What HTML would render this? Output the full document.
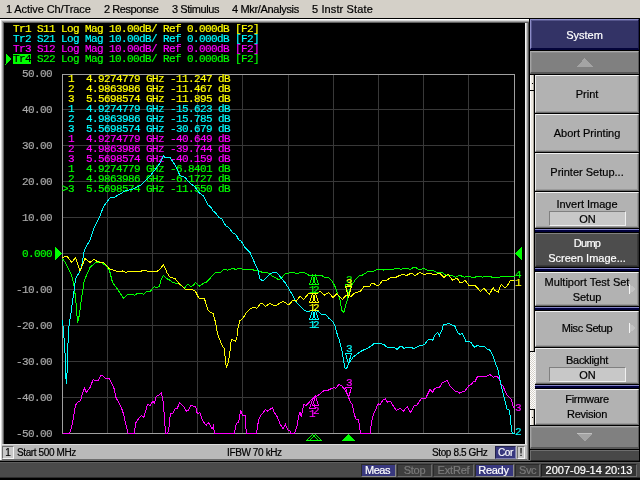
<!DOCTYPE html><html><head><meta charset="utf-8"><title>E5071C</title><style>
html,body{margin:0;padding:0;background:#000;}
body{width:640px;height:480px;overflow:hidden;position:relative;font-family:"Liberation Sans",sans-serif;font-size:11px;color:#000;-webkit-text-stroke:0.2px currentColor;}
div{position:absolute;box-sizing:border-box;white-space:pre;}
.menu{left:0;top:0;width:640px;height:18px;background:#d4d0c8;}
.menu span{position:absolute;top:3px;line-height:13px;}
.mono{font-family:"Liberation Mono",monospace;font-size:10px;line-height:10px;letter-spacing:0;}
.t{font-family:"Liberation Mono",monospace;font-size:11px;letter-spacing:-0.6px;line-height:10px;height:10px;}
.btn{left:535px;width:104px;background:#b2b2b2;border-top:1px solid #f0f0f0;border-left:1px solid #ececec;border-bottom:1px solid #6a6a6a;border-right:1px solid #6a6a6a;box-shadow:inset -1px -1px 0 #9a9a9a;text-align:center;}
.btn span{position:absolute;left:0;width:102px;text-align:center;line-height:13px;}
.on{left:13px;width:77px;height:15px;background:#c8c8c8;border-top:1px solid #808080;border-left:1px solid #808080;border-bottom:1px solid #f0f0f0;border-right:1px solid #f0f0f0;text-align:center;line-height:15px;}
.blue{left:535px;width:104px;height:3px;background:#00003c;border-top:1px solid #8484c8;}
.sb{top:446px;line-height:13px;font-size:10px;letter-spacing:-0.38px;}
.cell{top:464px;height:13px;line-height:11px;text-align:center;border:1px solid;font-size:11px;}
.nv{background:#38387e;color:#fff;border-color:#2a2a2a #8a8a8a #8a8a8a #2a2a2a;}
.dk{background:#3e3e3e;color:#7a7a7a;border-color:#2a2a2a #6a6a6a #6a6a6a #2a2a2a;}
</style></head><body><div id="w" style="left:0;top:0;width:640px;height:480px;will-change:transform">
<div class="menu"><span style="left:6px;letter-spacing:-0.1px">1 Active Ch/Trace</span><span style="left:104px;letter-spacing:-0.44px">2 Response</span><span style="left:172px;letter-spacing:-0.44px">3 Stimulus</span><span style="left:232px;letter-spacing:-0.33px">4 Mkr/Analysis</span><span style="left:312px;letter-spacing:0.12px">5 Instr State</span></div>
<div style="left:0;top:19px;width:530px;height:442px;background:#fff"></div>
<div style="left:1px;top:20px;width:528px;height:441px;background:#d6d6d6"></div>
<div style="left:2px;top:21px;width:527px;height:440px;background:#a0a0a0"></div>
<div style="left:3px;top:22px;width:526px;height:439px;background:#606060"></div>
<div style="left:4px;top:23px;width:521px;height:421px;background:#000"></div>
<div style="left:525px;top:23px;width:1px;height:437px;background:#f4f4f4"></div>
<div style="left:526px;top:23px;width:1px;height:437px;background:#c8c8c8"></div>
<div style="left:527px;top:23px;width:1px;height:437px;background:#909090"></div>
<div style="left:528px;top:23px;width:1px;height:437px;background:#505050"></div>
<div style="left:529px;top:19px;width:1px;height:442px;background:#000"></div>
<div style="left:2px;top:444px;width:525px;height:16px;background:#b9b9b9;border-top:1px solid #dcdcdc;border-bottom:1px solid #6c6c6c"></div>
<div style="left:0;top:460px;width:530px;height:1px;background:#686868"></div>
<div style="left:2px;top:446px;width:12px;height:13px;background:#c8c8c8;border:1px solid;border-color:#707070 #f4f4f4 #f4f4f4 #707070;line-height:11px;font-size:10px;text-align:center">1</div>
<div class="sb" style="left:17px">Start 500 MHz</div>
<div class="sb" style="left:227px">IFBW 70 kHz</div>
<div class="sb" style="left:432px">Stop 8.5 GHz</div>
<div style="left:495px;top:446px;width:21px;height:13px;background:#38387e;color:#fff;line-height:11px;font-size:10px;letter-spacing:-0.3px;text-align:center;border:1px solid;border-color:#22224a #8080b0 #8080b0 #22224a">Cor</div>
<div style="left:517px;top:446px;width:8px;height:13px;background:#c8c8c8;line-height:11px;text-align:center;border:1px solid;border-color:#707070 #f4f4f4 #f4f4f4 #707070">!</div>
<div style="left:0;top:461px;width:640px;height:19px;background:#4a4a4a;border-top:1px solid #000;border-bottom:2px solid #000;box-shadow:inset 0 1px 0 #5e5e5e, inset 0 -1px 0 #2c2c2c"></div>
<div class="cell nv" style="left:361px;width:35px;letter-spacing:-0.5px;padding-right:2px">Meas</div>
<div class="cell dk" style="left:397px;width:35px;letter-spacing:-0.3px;padding-right:0px">Stop</div>
<div class="cell dk" style="left:433px;width:41px;letter-spacing:-0.2px;padding-right:0px">ExtRef</div>
<div class="cell nv" style="left:475px;width:39px;letter-spacing:-0.3px;padding-right:2px">Ready</div>
<div class="cell dk" style="left:515px;width:25px;letter-spacing:-0.5px;padding-right:0px">Svc</div>
<div class="cell" style="left:541px;width:96px;background:#333;color:#fff;border-color:#1e1e1e #6a6a6a #6a6a6a #1e1e1e">2007-09-14 20:13</div>
<div style="left:530px;top:19px;width:110px;height:442px;background:#000"></div>
<div style="left:530px;top:19px;width:109px;height:31px;background:#333366;border-top:1px solid #8c8cc8;border-left:1px solid #8c8cc8;border-bottom:2px solid #04043a;border-right:1px solid #1a1a48;box-shadow:inset 1px 1px 0 #55558c;color:#fff;text-align:center;line-height:30px">System</div>
<div style="left:530px;top:51px;width:109px;height:23px;background:#808080;border-top:1px solid #ababab;border-left:1px solid #a4a4a4;border-bottom:2px solid #585858;border-right:1px solid #585858;box-shadow:inset 1px 1px 0 #8e8e8e"></div>
<div style="left:530px;top:426px;width:109px;height:23px;background:#808080;border-top:1px solid #ababab;border-left:1px solid #a4a4a4;border-bottom:2px solid #585858;border-right:1px solid #585858;box-shadow:inset 1px 1px 0 #8e8e8e"></div>
<div style="left:530px;top:450px;width:109px;height:11px;background:#484848;border-top:1px solid #6e6e6e;border-left:1px solid #6e6e6e;border-bottom:1px solid #2a2a2a"></div>
<div style="left:530px;top:75px;width:4px;height:15px;background:#ece8e0;border-left:1px solid #fff;border-right:1px solid #a8a49c"></div>
<div style="left:530px;top:91px;width:4px;height:260px;background:#ece8e0;border-left:1px solid #fff;border-right:1px solid #a8a49c"></div>
<div style="left:530px;top:352px;width:5px;height:57px;background:repeating-conic-gradient(#ffffff 0 25%,#d4d0c8 0 50%) 0 0/2px 2px"></div>
<div style="left:530px;top:410px;width:4px;height:15px;background:#ece8e0;border-left:1px solid #fff;border-right:1px solid #a8a49c"></div>
<div style="left:532px;top:83px;width:1px;height:1px;background:#000"></div>
<div style="left:532px;top:417px;width:1px;height:1px;background:#000"></div>
<div class="btn" style="top:75px;height:38px;"><span style="top:12px">Print</span></div>
<div class="btn" style="top:114px;height:38px;"><span style="top:12px">Abort Printing</span></div>
<div class="btn" style="top:153px;height:38px;"><span style="top:12px">Printer Setup...</span></div>
<div class="btn" style="top:192px;height:36px;"><span style="top:5px">Invert Image</span></div>
<div class="on" style="left:549px;top:211px">ON</div>
<div class="blue" style="top:229px"></div>
<div class="btn" style="top:233px;height:34px;background:#4d4d4d;color:#fff;border-color:#808080 #2c2c2c #2c2c2c #707070;box-shadow:inset -1px -1px 0 #3a3a3a;"><span style="top:3px;letter-spacing:-0.75px">Dump</span><span style="top:18px">Screen Image...</span></div>
<div class="blue" style="top:268px"></div>
<div class="btn" style="top:272px;height:34px;"><span style="top:3px">Multiport Test Set</span><span style="top:18px">Setup</span></div>
<div class="blue" style="top:307px"></div>
<div class="btn" style="top:311px;height:36px;"><span style="top:10px;letter-spacing:-0.4px">Misc Setup</span></div>
<div class="btn" style="top:348px;height:36px;"><span style="top:5px;letter-spacing:-0.3px">Backlight</span></div>
<div class="on" style="left:549px;top:367px">ON</div>
<div class="blue" style="top:385px"></div>
<div class="btn" style="top:389px;height:36px;"><span style="top:3px;letter-spacing:-0.3px">Firmware</span><span style="top:18px;letter-spacing:-0.27px">Revision</span></div>
<svg width="640" height="480" viewBox="0 0 640 480" style="position:absolute;left:0;top:0" shape-rendering="crispEdges"><path d="M107.5,74V434 M152.5,74V434 M197.5,74V434 M242.5,74V434 M288.5,74V434 M333.5,74V434 M378.5,74V434 M423.5,74V434 M468.5,74V434 M62,109.5H515 M62,145.5H515 M62,181.5H515 M62,217.5H515 M62,253.5H515 M62,289.5H515 M62,325.5H515 M62,361.5H515 M62,397.5H515" stroke="#383838" stroke-width="1" fill="none"/><rect x="62.5" y="74.5" width="452" height="359" stroke="#a0a0a0" stroke-width="1" fill="none"/></svg>
<div class="t" style="left:13px;top:24px;color:#ffff00;">Tr1 S11 Log Mag 10.00dB/ Ref 0.000dB [F2]</div>
<div class="t" style="left:13px;top:34px;color:#00ffff;">Tr2 S21 Log Mag 10.00dB/ Ref 0.000dB [F2]</div>
<div class="t" style="left:13px;top:44px;color:#ff00ff;">Tr3 S12 Log Mag 10.00dB/ Ref 0.000dB [F2]</div>
<div style="left:13px;top:54px;width:18px;height:10px;background:#00ff00"></div>
<div class="t" style="left:13px;top:54px;color:#000;">Tr4</div>
<div class="t" style="left:37px;top:54px;color:#00ff00;">S22 Log Mag 10.00dB/ Ref 0.000dB [F2]</div>
<div class="t" style="left:22px;top:69px;color:#a8a8a8;">50.00</div>
<div class="t" style="left:22px;top:105px;color:#a8a8a8;">40.00</div>
<div class="t" style="left:22px;top:141px;color:#a8a8a8;">30.00</div>
<div class="t" style="left:22px;top:177px;color:#a8a8a8;">20.00</div>
<div class="t" style="left:22px;top:213px;color:#a8a8a8;">10.00</div>
<div class="t" style="left:22px;top:249px;color:#00ff00;">0.000</div>
<div class="t" style="left:16px;top:285px;color:#a8a8a8;">-10.00</div>
<div class="t" style="left:16px;top:321px;color:#a8a8a8;">-20.00</div>
<div class="t" style="left:16px;top:357px;color:#a8a8a8;">-30.00</div>
<div class="t" style="left:16px;top:393px;color:#a8a8a8;">-40.00</div>
<div class="t" style="left:16px;top:429px;color:#a8a8a8;">-50.00</div>
<div class="t" style="left:62px;top:74px;color:#ffff00;"> 1  4.9274779 GHz -11.247 dB</div>
<div class="t" style="left:62px;top:84px;color:#ffff00;"> 2  4.9863986 GHz -11.467 dB</div>
<div class="t" style="left:62px;top:94px;color:#ffff00;"> 3  5.5698574 GHz -11.895 dB</div>
<div class="t" style="left:62px;top:104px;color:#00ffff;"> 1  4.9274779 GHz -15.623 dB</div>
<div class="t" style="left:62px;top:114px;color:#00ffff;"> 2  4.9863986 GHz -15.785 dB</div>
<div class="t" style="left:62px;top:124px;color:#00ffff;"> 3  5.5698574 GHz -30.679 dB</div>
<div class="t" style="left:62px;top:134px;color:#ff00ff;"> 1  4.9274779 GHz -40.649 dB</div>
<div class="t" style="left:62px;top:144px;color:#ff00ff;"> 2  4.9863986 GHz -39.744 dB</div>
<div class="t" style="left:62px;top:154px;color:#ff00ff;"> 3  5.5698574 GHz -40.159 dB</div>
<div class="t" style="left:62px;top:164px;color:#00ff00;"> 1  4.9274779 GHz -6.8401 dB</div>
<div class="t" style="left:62px;top:174px;color:#00ff00;"> 2  4.9863986 GHz -6.1727 dB</div>
<div class="t" style="left:62px;top:184px;color:#00ff00;">&gt;3  5.5698574 GHz -11.550 dB</div>
<svg width="640" height="480" viewBox="0 0 640 480" style="position:absolute;left:0;top:0" shape-rendering="crispEdges">
<polyline points="62.5,258.8 65.6,263.0 71.9,276.2 74.4,287.5 76.2,305.0 77.5,322.5 79.4,315.0 81.2,301.0 82.8,290.0 84.4,280.0 90.0,267.5 95.0,263.0 100.0,261.9 105.0,265.0 109.4,270.0 112.5,282.5 118.1,290.0 123.4,298.0 128.1,294.4 132.5,294.4 134.4,295.2 137.5,293.5 142.5,293.5 143.8,294.5 146.9,291.2 150.6,291.0 154.4,286.5 156.9,287.8 159.4,286.2 161.2,278.8 163.5,275.6 166.2,278.5 169.4,279.8 173.1,282.8 178.8,283.5 184.4,288.0 188.1,284.0 190.6,286.5 193.1,285.6 195.4,282.5 199.4,286.2 204.4,282.5 206.9,281.9 215.0,272.8 220.6,272.2 223.8,269.4 227.5,270.2 233.1,268.5 235.6,269.4 238.1,268.5 241.2,268.5 242.5,269.4 252.5,269.4 253.8,270.2 258.1,270.6 261.9,272.2 267.5,272.5 272.5,276.2 278.8,279.8 281.9,277.5 285.0,273.8 291.2,272.5 296.2,273.1 298.8,273.1 303.1,272.2 305.6,273.1 309.4,275.6 312.5,275.0 318.8,275.0 321.2,275.2 325.0,277.5 328.1,277.2 331.9,280.6 335.6,287.5 338.1,295.0 340.0,300.0 341.9,310.6 344.0,312.5 345.6,305.0 347.2,300.0 348.8,293.1 351.9,285.0 355.6,279.4 359.4,275.6 362.5,275.0 368.1,271.5 373.8,271.2 377.5,269.4 381.2,269.4 383.1,270.2 385.0,269.4 392.5,269.4 396.2,268.5 398.8,268.5 400.6,269.4 403.1,268.5 408.1,268.5 410.0,269.4 413.8,267.2 415.6,267.5 418.8,269.4 421.2,269.4 423.1,268.5 425.0,268.8 427.5,270.2 433.1,270.2 436.9,272.8 442.5,272.5 445.0,274.8 447.5,275.6 452.5,275.6 455.6,277.2 458.8,275.6 460.6,275.6 464.4,277.2 466.2,276.2 468.8,276.2 471.2,277.2 475.0,277.2 476.9,276.5 480.6,276.5 482.5,277.2 485.0,276.5 490.6,276.5 491.9,277.2 500.0,277.2 501.2,276.5 514.5,276.5" stroke="#00ff00" stroke-width="1" fill="none"/>
<polyline points="62.5,433.5 69.4,433.5 71.9,426.0 73.8,415.0 75.6,405.0 77.5,402.5 80.6,400.6 81.9,395.0 84.4,388.0 86.2,392.5 90.0,387.5 93.1,379.8 98.1,381.0 100.6,375.6 102.5,375.6 105.0,378.0 109.4,378.8 113.8,387.5 115.6,396.2 116.2,398.0 121.2,407.0 123.8,415.0 126.2,426.0 128.1,433.5 134.4,433.5 135.6,423.0 136.9,421.0 141.2,415.6 143.8,417.2 145.6,411.2 147.5,404.4 150.0,405.6 152.8,401.5 154.4,403.1 156.2,396.5 158.8,395.0 161.5,392.5 163.1,401.9 164.0,411.9 165.0,425.6 165.6,433.5 167.5,433.5 168.8,428.8 170.0,417.5 170.6,413.5 173.1,413.1 175.0,409.0 177.5,408.1 179.4,402.5 183.8,406.9 186.2,411.2 188.5,410.0 191.0,405.6 195.6,406.5 196.9,412.5 198.1,414.0 199.8,412.5 201.9,418.8 204.4,423.1 206.2,425.2 208.5,422.5 211.9,429.0 213.5,425.6 214.4,433.5 234.4,433.5 235.6,427.5 236.5,423.1 238.1,422.5 239.4,418.8 240.6,410.2 241.9,413.8 243.1,415.6 245.2,415.6 245.6,425.0 246.5,433.5 256.2,433.5 257.5,427.5 258.5,419.8 260.6,415.6 263.8,411.9 265.5,409.4 267.6,411.2 272.5,407.5 273.8,411.9 276.9,416.2 280.0,423.8 283.1,429.0 285.4,424.4 288.1,430.0 290.0,430.6 290.6,433.5 294.4,433.5 296.9,426.2 298.8,416.2 300.0,411.9 301.2,417.2 303.8,404.4 306.2,405.6 310.0,401.2 315.0,396.5 317.5,396.0 322.5,391.5 325.0,390.2 328.1,390.2 333.8,387.5 335.6,388.5 338.8,384.4 341.9,386.0 345.6,390.6 348.8,396.9 350.0,401.2 352.5,405.0 354.4,415.0 356.2,419.4 358.5,420.0 360.0,430.0 360.6,433.5 370.6,433.5 371.2,422.5 373.8,413.8 378.1,403.8 380.0,405.0 383.1,399.8 385.4,398.8 387.5,402.2 390.6,401.5 393.1,405.6 396.2,410.2 400.6,408.5 403.5,411.2 407.2,406.5 410.6,412.5 414.4,405.6 416.9,405.0 421.2,398.8 425.6,398.5 430.0,389.4 432.5,392.5 434.4,388.8 436.9,387.5 439.4,387.5 441.9,383.1 447.2,380.4 450.6,386.9 455.0,391.2 457.5,391.5 459.8,393.1 462.5,391.5 464.4,391.5 468.8,385.8 471.2,384.6 473.1,381.9 475.0,381.5 477.5,376.7 486.2,376.7 490.0,374.4 493.1,377.2 496.9,376.5 499.4,379.0 501.2,384.4 503.1,386.2 506.2,393.8 511.2,399.4 513.1,406.2 514.5,408.1" stroke="#ff00ff" stroke-width="1" fill="none"/>
<polyline points="62.5,320.0 63.1,327.5 64.0,337.5 65.0,352.5 65.6,372.5 66.4,384.4 67.2,370.0 67.4,350.0 68.3,340.0 68.5,330.0 69.4,322.5 70.6,316.0 72.5,301.0 73.8,293.0 74.4,287.5 75.6,278.8 80.0,271.2 81.9,265.0 84.4,250.0 90.0,240.0 93.8,228.8 98.8,218.8 103.8,206.0 110.0,198.0 115.0,197.0 125.0,191.0 133.8,188.8 141.2,185.0 150.0,176.0 158.8,165.0 163.8,155.5 165.0,158.0 170.0,157.5 175.0,165.0 180.0,175.5 185.0,177.5 190.0,183.0 195.0,187.0 199.4,193.0 203.8,196.2 207.5,204.4 210.6,206.9 213.1,211.2 215.6,212.8 218.8,217.2 221.9,218.8 225.6,225.6 229.4,228.1 232.5,232.5 236.2,235.0 238.8,240.0 241.2,241.0 245.0,247.5 250.0,252.5 258.1,270.6 260.0,278.8 263.1,281.2 269.4,274.4 273.1,272.5 276.2,272.2 279.4,275.6 281.9,278.8 285.0,282.5 288.1,287.5 293.1,296.2 296.2,301.9 301.9,308.1 305.6,311.0 308.8,311.5 311.9,310.0 315.0,310.0 318.1,311.2 321.2,314.0 325.6,314.4 328.8,318.1 332.5,321.2 335.0,326.2 338.1,337.5 339.4,340.0 340.3,345.0 341.6,349.4 342.5,353.0 343.4,360.0 344.5,365.6 345.0,368.4 346.6,368.4 347.8,365.6 348.8,363.0 351.6,359.4 353.1,357.2 356.2,354.7 359.4,352.5 362.5,350.3 365.6,349.4 368.8,347.5 371.9,345.6 373.8,343.5 379.4,343.5 383.8,344.4 388.1,348.1 391.2,347.2 394.4,347.2 396.9,349.4 400.6,346.2 401.9,346.5 403.8,348.5 406.9,347.2 411.2,347.2 413.1,348.5 415.0,348.1 418.8,346.0 423.1,345.2 425.0,343.8 428.1,339.8 431.9,339.4 432.8,340.2 435.0,335.0 437.5,332.5 439.4,335.6 441.9,330.0 443.5,324.8 446.2,324.4 448.1,323.1 451.2,324.8 455.0,326.2 457.5,332.5 460.0,334.4 462.5,333.5 466.2,341.9 468.8,341.2 471.2,342.5 474.0,347.2 477.5,345.6 480.0,346.5 484.4,346.5 486.9,349.0 490.0,350.2 493.1,356.2 495.6,363.8 498.1,370.0 500.0,380.0 501.9,388.8 503.8,396.2 505.6,403.1 507.2,409.4 509.4,410.0 510.6,420.0 511.5,430.0 512.5,433.5 514.5,433.5" stroke="#00ffff" stroke-width="1" fill="none"/>
<polyline points="62.5,257.5 66.9,256.2 71.9,262.5 75.6,257.5 80.0,271.2 85.0,258.5 90.0,262.5 93.8,259.4 98.1,261.9 103.8,262.5 109.4,268.8 118.8,271.9 122.5,271.0 126.2,272.5 128.8,271.2 141.2,271.2 143.0,270.2 146.2,270.2 147.5,271.5 156.9,271.5 159.4,269.8 163.5,264.4 166.9,272.5 170.0,277.2 175.0,278.5 179.4,283.8 185.6,289.4 191.9,289.8 195.0,290.6 198.8,298.0 204.4,298.5 208.1,310.6 213.1,313.8 215.6,322.5 217.5,333.8 221.9,345.0 224.4,348.8 225.6,362.5 226.5,367.8 228.1,362.5 229.8,353.8 230.6,343.8 231.5,339.4 235.6,341.2 236.9,337.5 238.1,327.5 240.0,320.6 243.1,318.1 246.9,311.9 250.6,308.5 254.4,307.5 256.9,308.5 260.6,303.1 262.5,303.8 265.6,306.2 270.0,303.5 275.0,306.2 283.1,301.2 288.8,305.0 293.1,300.0 296.2,301.2 300.0,296.2 303.8,299.4 308.8,293.1 313.1,293.1 316.2,293.8 320.0,291.2 324.4,295.0 328.5,292.5 333.1,297.5 336.9,293.8 342.5,299.4 345.6,295.6 348.8,295.6 351.2,296.5 354.4,293.1 358.1,291.9 360.6,291.2 363.8,286.9 366.2,286.2 369.4,286.9 371.2,283.8 373.1,283.1 378.1,286.2 382.5,280.6 386.9,280.2 390.6,277.5 396.2,277.2 401.9,274.4 404.4,274.4 406.2,275.6 410.6,273.5 412.5,273.5 414.8,275.6 420.0,272.5 423.8,274.4 428.1,273.5 431.2,273.5 433.1,274.4 436.2,274.4 437.5,273.5 440.0,273.5 443.8,277.5 448.1,274.0 452.5,280.2 456.9,278.1 460.0,282.5 462.5,282.5 465.0,280.2 468.8,285.2 475.0,285.2 480.6,291.5 483.8,288.1 489.4,294.4 493.1,287.5 495.0,290.6 498.1,292.2 501.2,284.4 504.4,287.5 506.9,286.5 510.6,280.2 514.5,281.2" stroke="#ffff00" stroke-width="1" fill="none"/>
<polygon points="55,247 55,260.5 62,253.5" fill="#00ff00"/>
<polygon points="522,247 522,260.5 515,253.5" fill="#00ff00"/>
<polygon points="5.5,53.5 5.5,64.5 11.5,59" fill="#00ff00"/>
<polygon points="312.5,434.5 306.5,440.5 318.5,440.5" fill="none" stroke="#00ff00"/>
<polygon points="315.5,434.5 309.5,440.5 321.5,440.5" fill="none" stroke="#00ff00"/>
<polygon points="348.5,434 342,441 355,441" fill="#00ff00"/>
<polygon points="312.5,275.5 309.5,284.5 315.5,284.5" fill="none" stroke="#00ff00"/>
<polygon points="315.5,275.5 312.5,284.5 318.5,284.5" fill="none" stroke="#00ff00"/>
<polygon points="312.5,399.5 309.5,408.5 315.5,408.5" fill="none" stroke="#ff00ff"/>
<polygon points="315.5,396.5 312.5,405.5 318.5,405.5" fill="none" stroke="#ff00ff"/>
<polygon points="312.5,310.5 309.5,319.5 315.5,319.5" fill="none" stroke="#00ffff"/>
<polygon points="315.5,310.5 312.5,319.5 318.5,319.5" fill="none" stroke="#00ffff"/>
<polygon points="312.5,293.5 309.5,302.5 315.5,302.5" fill="none" stroke="#ffff00"/>
<polygon points="315.5,293.5 312.5,302.5 318.5,302.5" fill="none" stroke="#ffff00"/>
<polygon points="348.5,294.5 345.5,284.5 351.5,284.5" fill="none" stroke="#00ff00"/>
<polygon points="348.5,397.5 345.5,387.5 351.5,387.5" fill="none" stroke="#ff00ff"/>
<polygon points="348.5,363.5 345.5,353.5 351.5,353.5" fill="none" stroke="#00ffff"/>
<polygon points="348.5,296.5 345.5,286.5 351.5,286.5" fill="none" stroke="#ffff00"/>
<polygon points="584.5,58 577,67 593,67" fill="#a4a4a4"/>
<polygon points="576.5,433.5 592.5,433.5 584.5,441.5" fill="#a4a4a4"/>
<polygon points="629.5,284 629.5,294 636,289" fill="#c2c2c2"/>
<polygon points="629.5,323 629.5,333 636,328" fill="#c2c2c2"/>
<path d="M629.5,284V294M629.5,323V333" stroke="#f4f4f4" fill="none"/>
<path d="M577,433.5H592" stroke="#c0c0c0" fill="none"/>
</svg>
<div class="t" style="left:309px;top:285px;color:#00ff00;">1</div>
<div class="t" style="left:313px;top:285px;color:#00ff00;">2</div>
<div class="t" style="left:309px;top:409px;color:#ff00ff;">1</div>
<div class="t" style="left:313px;top:406px;color:#ff00ff;">2</div>
<div class="t" style="left:309px;top:320px;color:#00ffff;">1</div>
<div class="t" style="left:313px;top:320px;color:#00ffff;">2</div>
<div class="t" style="left:309px;top:303px;color:#ffff00;">1</div>
<div class="t" style="left:313px;top:303px;color:#ffff00;">2</div>
<div class="t" style="left:346px;top:275px;color:#00ff00;">3</div>
<div class="t" style="left:346px;top:378px;color:#ff00ff;">3</div>
<div class="t" style="left:346px;top:344px;color:#00ffff;">3</div>
<div class="t" style="left:346px;top:278px;color:#ffff00;">3</div>
<div class="t" style="left:515px;top:270px;color:#00ff00;">4</div>
<div class="t" style="left:515px;top:278px;color:#ffff00;">1</div>
<div class="t" style="left:515px;top:403px;color:#ff00ff;">3</div>
<div class="t" style="left:515px;top:427px;color:#00ffff;">2</div>
</div></body></html>
